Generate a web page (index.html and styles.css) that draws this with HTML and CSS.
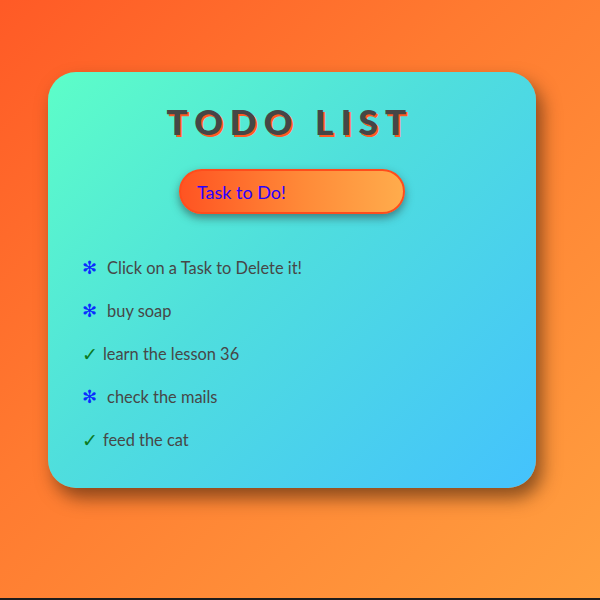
FILE: index.html
```html
<!DOCTYPE html>
<html>
<head>
<meta charset="utf-8">
<link rel="stylesheet" href="styles.css">
</head>
<body>
<div class="page">
  <div class="card">
    <h1 class="title">TODO LIST</h1>
    <div class="input">Task to Do!</div>
    <ul class="list">
      <li class="item todo"><span class="mark">✻</span>Click on a Task to Delete it!</li>
      <li class="item todo"><span class="mark">✻</span>buy soap</li>
      <li class="item done"><span class="mark">✓</span>learn the lesson 36</li>
      <li class="item todo"><span class="mark">✻</span>check the mails</li>
      <li class="item done"><span class="mark">✓</span>feed the cat</li>
    </ul>
  </div>
</div>
</body>
</html>
```
FILE: styles.css
```css
html { background: #1c1c1c; }
body { margin: 0; }
.page {
  height: 598px;
  background: linear-gradient(135deg, #ff5a26 0%, #ff7a30 40%, #ffa040 100%);
  padding: 72px 0 0 48px;
  box-sizing: border-box;
  font-family: "Lato", "Open Sans", sans-serif;
}
.card {
  width: 488px;
  height: 416px;
  box-sizing: border-box;
  border-radius: 28px;
  background: linear-gradient(135deg, #5dfec8 0%, #4fdedd 45%, #44c2fd 100%);
  box-shadow: 6px 10px 18px rgba(60, 30, 10, 0.6);
  padding-top: 29px;
  display: flex;
  flex-direction: column;
  align-items: center;
}
.title {
  margin: 0;
  font-size: 35px;
  font-weight: 900;
  letter-spacing: 7.3px;
  color: #464646;
  text-shadow: 2px 2px 0 #ff5a22;
  line-height: 40px;
  padding-right: 4px;
}
.input {
  margin-top: 28px;
  width: 226px;
  height: 45px;
  box-sizing: border-box;
  border: 2px solid #ff4d1c;
  border-radius: 23px;
  background: linear-gradient(90deg, #ff5422 0%, #ff8a38 55%, #ffac4c 100%);
  box-shadow: 0 4px 8px rgba(40, 40, 40, 0.5);
  color: #2a00ff;
  font-size: 18px;
  padding-left: 16px;
  display: flex;
  align-items: center;
}
.list {
  list-style: none;
  margin: 43px 0 0 0;
  padding: 0 0 0 34px;
  align-self: stretch;
  display: flex;
  flex-direction: column;
  gap: 21px;
}
.item {
  font-size: 16.4px;
  color: #474747;
  line-height: 22px;
  display: flex;
  align-items: center;
}
.mark { margin-right: 10px; font-family: "DejaVu Sans", sans-serif; }
.todo .mark { color: #0a2cff; font-size: 18px; }
.done .mark { color: #0b7a1f; font-size: 19px; font-weight: bold; margin-right: 5px; }
```
